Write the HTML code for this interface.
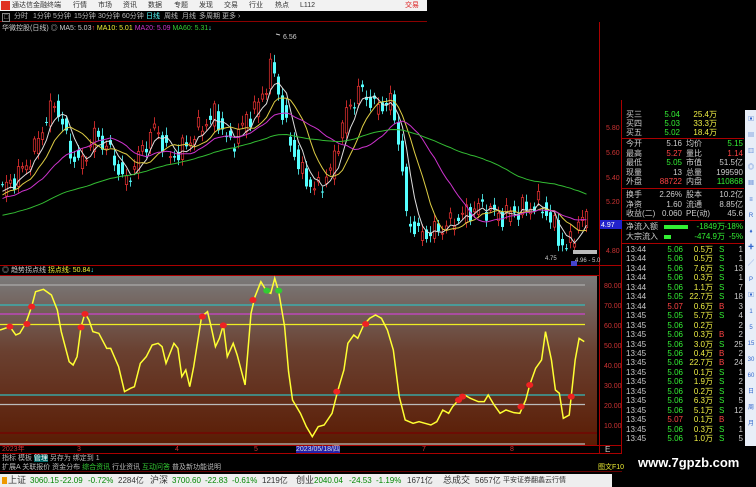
<!DOCTYPE html>
<html><head><meta charset="utf-8"><style>
*{margin:0;padding:0;box-sizing:border-box}
body{width:756px;height:487px;background:#000;overflow:hidden;position:relative;font-family:"Liberation Sans","Noto Sans CJK SC",sans-serif;font-size:8px;color:#ccc}
.a{position:absolute;white-space:nowrap;line-height:1}
#title{left:0;top:0;width:427px;height:11px;background:#f2f2f2;color:#333;font-size:7px}
#tabs{left:0;top:11px;width:427px;height:11px;border-bottom:1px solid #8b0000;font-size:7px}
.r{text-align:right}
</style></head><body>
<div id="title" class="a">
<div class="a" style="left:1px;top:1px;width:9px;height:9px;background:#e03020"></div>
<span class="a" style="left:12px;top:2px">通达信金融终端</span>
<span class="a" style="left:73px;top:2px">行情</span><span class="a" style="left:98px;top:2px">市场</span><span class="a" style="left:123px;top:2px">资讯</span><span class="a" style="left:148px;top:2px">数据</span><span class="a" style="left:174px;top:2px">专题</span><span class="a" style="left:199px;top:2px">发现</span><span class="a" style="left:224px;top:2px">交易</span><span class="a" style="left:249px;top:2px">行业</span><span class="a" style="left:275px;top:2px">热点</span><span class="a" style="left:300px;top:2px">L112</span>
<span class="a" style="left:405px;top:2px;color:#d22">交易</span>
</div>
<div id="tabs" class="a" style="color:#bbb">
<span class="a" style="left:2px;top:2px;border:1px solid #888;padding:0 1px">□</span>
<span class="a" style="left:14px;top:2px">分时</span><span class="a" style="left:33px;top:2px">1分钟</span><span class="a" style="left:53px;top:2px">5分钟</span><span class="a" style="left:74px;top:2px">15分钟</span><span class="a" style="left:98px;top:2px">30分钟</span><span class="a" style="left:122px;top:2px">60分钟</span><span class="a" style="left:146px;top:2px;color:#5ff">日线</span><span class="a" style="left:164px;top:2px">周线</span><span class="a" style="left:182px;top:2px">月线</span><span class="a" style="left:199px;top:2px">多周期</span><span class="a" style="left:222px;top:2px">更多 ›</span>
</div>
<div class="a" style="left:2px;top:25px;color:#ccc;font-size:7px">华微控股(日线) ◎ MA5: 5.03<span style="color:#f44">↑</span> <span style="color:#ee3">MA10: 5.01</span> <span style="color:#c3c">MA20: 5.09</span> <span style="color:#3c3">MA60: 5.31</span><span style="color:#5ff">↓</span></div>

<svg class="a" style="left:0;top:0" width="756" height="487" id="sv">
<defs><linearGradient id="g" x1="0" y1="0" x2="0" y2="1"><stop offset="0" stop-color="#7a7a7a"/><stop offset="0.45" stop-color="#6a4030"/><stop offset="1" stop-color="#5a1c04"/></linearGradient></defs>
<line x1="599.5" y1="22" x2="599.5" y2="453" stroke="#a00"/>
<line x1="0" y1="265.5" x2="622" y2="265.5" stroke="#a00"/>
<line x1="0" y1="275.5" x2="600" y2="275.5" stroke="#a00"/>
<line x1="621.5" y1="100" x2="621.5" y2="453" stroke="#a00"/>
<g id="cand"></g>
<g id="mas" fill="none" stroke-width="1"></g>
<text x="283" y="39" fill="#ccc" font-size="7">6.56</text>
<path d="M276 34 l4 1" stroke="#ccc"/>
<text x="545" y="260" fill="#ccc" font-size="6">4.75</text>
<rect x="573" y="250" width="24" height="4" fill="#bbb"/>
<text x="575" y="262" fill="#ccc" font-size="6">4.96 - 5.0</text>
<rect x="571" y="261" width="6" height="5" fill="#44c"/>
<rect x="0" y="276" width="597" height="169" fill="url(#g)"/>
<g stroke-width="1.3">
<line x1="0" y1="285" x2="585" y2="285" stroke="#aaa"/>
<line x1="0" y1="305" x2="585" y2="305" stroke="#3bb"/>
<line x1="0" y1="314" x2="585" y2="314" stroke="#c4c"/>
<line x1="0" y1="324.5" x2="585" y2="324.5" stroke="#ee2"/>
<line x1="0" y1="395" x2="585" y2="395" stroke="#3bb"/>
<line x1="0" y1="404.5" x2="585" y2="404.5" stroke="#bbb"/>
<line x1="0" y1="433" x2="597" y2="433" stroke="#700"/>
<line x1="0" y1="444" x2="585" y2="444" stroke="#bbb"/>
</g>
<g transform="translate(0,260) scale(0.3953,0.3333)">
<polyline fill="none" stroke="#ff3" stroke-width="1.5" vector-effect="non-scaling-stroke" points="0,210 25,200 40,225 50,220 65,190 80,140 90,95 110,88 130,105 145,150 155,215 175,305 185,315 195,290 205,200 215,160 225,180 235,215 250,220 270,265 280,265 300,320 315,395 330,385 340,380 355,310 370,290 385,255 400,250 410,260 420,310 440,250 450,265 460,350 470,330 480,380 490,320 500,245 510,170 525,155 535,205 545,260 555,235 565,195 575,290 590,250 600,285 620,375 635,160 645,110 660,65 675,95 685,100 695,55 705,95 720,200 730,335 740,420 760,460 775,500 790,530 805,500 820,495 840,460 855,390 870,330 880,250 895,225 905,235 920,195 935,175 950,165 965,175 980,210 995,270 1010,410 1025,480 1045,490 1060,485 1075,490 1090,495 1105,485 1120,450 1135,460 1145,440 1160,420 1175,405 1190,415 1210,425 1225,425 1235,405 1250,435 1265,460 1280,450 1300,458 1315,460 1330,420 1340,375 1355,325 1370,300 1380,215 1395,300 1405,390 1415,400 1425,475 1440,465 1455,300 1465,235 1478,245"/>
<g fill="#e22">
<circle cx="25" cy="200" r="9" /><circle cx="68" cy="192" r="9"/><circle cx="80" cy="140" r="9"/><circle cx="205" cy="202" r="9"/><circle cx="215" cy="162" r="9"/><circle cx="512" cy="170" r="9"/><circle cx="565" cy="196" r="9"/><circle cx="640" cy="120" r="9"/><circle cx="852" cy="395" r="9"/><circle cx="925" cy="192" r="9"/><circle cx="1160" cy="420" r="9"/><circle cx="1170" cy="410" r="9"/><circle cx="1318" cy="440" r="9"/><circle cx="1340" cy="375" r="9"/><circle cx="1445" cy="410" r="9"/>
</g>
<g fill="#3c3"><circle cx="675" cy="92" r="9"/><circle cx="705" cy="92" r="9"/></g>
</g>
<g fill="#c33" font-size="7">
<text x="606" y="130">5.80</text><text x="606" y="155">5.60</text><text x="606" y="180">5.40</text><text x="606" y="204">5.20</text><text x="606" y="253">4.80</text>
<text x="604" y="288">80.00</text><text x="604" y="308">70.00</text><text x="604" y="328">60.00</text><text x="604" y="348">50.00</text><text x="604" y="368">40.00</text><text x="604" y="388">30.00</text><text x="604" y="408">20.00</text><text x="604" y="428">10.00</text>
</g>
<rect x="600" y="220" width="22" height="9" fill="#22c"/>
<text x="601" y="227" fill="#fff" font-size="7">4.97</text>
<line x1="0" y1="445.5" x2="622" y2="445.5" stroke="#a00"/>
<line x1="0" y1="453.5" x2="622" y2="453.5" stroke="#a00"/>
</svg>

<div class="a" style="left:2px;top:267px;color:#ccc;font-size:7px">◎ 趋势拐点线 <span style="color:#ee3">拐点线: 50.84</span><span style="color:#5ff">↓</span></div>
<div class="a" style="left:0;top:446px;width:600px;color:#c33;font-size:7px">
<span class="a" style="left:2px">2023年</span><span class="a" style="left:77px">3</span><span class="a" style="left:175px">4</span><span class="a" style="left:254px">5</span><span class="a" style="left:296px;background:#22a;color:#ddd">2023/05/18/四</span><span class="a" style="left:422px">7</span><span class="a" style="left:510px">8</span></div>
<span class="a" style="left:605px;top:446px;color:#ccc">E</span>
<div class="a" style="left:2px;top:455px;color:#bbb;font-size:7px">指标 模板 <span style="background:#066;color:#fff">管理</span> 另存为 绑定到 1</div>
<div class="a" style="left:0;top:463px;width:622px;height:9px;border-bottom:1px solid #600;color:#bbb;font-size:7px;padding:1px 2px">扩展A 关联报价 资金分布 <span style="color:#3c3">综合资讯</span> 行业资讯 <span style="color:#3c3">互动问答</span> 普及新功能说明<span style="position:absolute;left:598px;color:#ee3">图文F10</span></div>
<div class="a" style="left:0;top:474px;width:612px;height:13px;background:#eee;color:#333;font-size:8px">
<span class="a" style="left:2px;top:3px;width:5px;height:7px;background:#e90"></span>
<span class="a" style="left:8px;top:2px;font-size:9px">上证</span><span class="a" style="left:30px;top:3px;color:#080">3060.15</span><span class="a" style="left:60px;top:3px;color:#080">-22.09</span><span class="a" style="left:88px;top:3px;color:#080">-0.72%</span><span class="a" style="left:118px;top:3px">2284亿</span>
<span class="a" style="left:150px;top:2px;font-size:9px">沪深</span><span class="a" style="left:172px;top:3px;color:#080">3700.60</span><span class="a" style="left:205px;top:3px;color:#080">-22.83</span><span class="a" style="left:232px;top:3px;color:#080">-0.61%</span><span class="a" style="left:262px;top:3px">1219亿</span>
<span class="a" style="left:296px;top:2px;font-size:9px">创业</span><span class="a" style="left:314px;top:3px;color:#080">2040.04</span><span class="a" style="left:349px;top:3px;color:#080">-24.53</span><span class="a" style="left:376px;top:3px;color:#080">-1.19%</span><span class="a" style="left:407px;top:3px">1671亿</span>
<span class="a" style="left:443px;top:2px;font-size:9px">总成交</span><span class="a" style="left:475px;top:3px">5657亿</span><span class="a" style="left:503px;top:3px;font-size:7px">平安证券翻蠡云行情</span>
</div>
<div class="a" style="left:638px;top:456px;color:#fff;font-size:13px;font-weight:bold">www.7gpzb.com</div>

<div class="a" style="left:745px;top:110px;width:11px;height:336px;background:#e8eef8"></div>
<div class="a" style="left:746px;top:112px;color:#36c;font-size:6px;line-height:16px;white-space:normal;width:10px;text-align:center">▣<br>▤<br>▥<br>◎<br>▦<br>≡<br>R<br>♦<br>✚<br>╱<br>P<br>▣<br>1<br>5<br>15<br>30<br>60<br>日<br>周<br>月</div>

<div class="a" id="rp" style="left:622px;top:100px;width:122px;height:346px;font-size:8px"></div>

<script>
var rp=document.getElementById('rp'),h='';
function T(x,y,t,c,r){h+='<span class="a'+(r?' r':'')+'" style="'+(r?'right:'+(122-x):'left:'+x)+'px;top:'+y+'px;color:'+c+'">'+t+'</span>';}
var W='#ccc',G='#3e3',Y='#ee4',R='#f44';
T(4,11,'买三',W);T(58,11,'5.04',G,1);T(95,11,'25.4万',Y,1);
T(4,20,'买四',W);T(58,20,'5.03',G,1);T(95,20,'33.3万',Y,1);
T(4,29,'买五',W);T(58,29,'5.02',G,1);T(95,29,'18.4万',Y,1);
h+='<div class="a" style="left:0;top:38px;width:122px;border-top:1px solid #a00"></div>';
var rows=[['今开','5.16',W,'均价','5.15',G],['最高','5.27',R,'量比','1.14',R],['最低','5.05',G,'市值','51.5亿',W],['现量','13',W,'总量','199590',W],['外盘','88722',R,'内盘','110868',G]];
rows.forEach(function(r,i){var y=40+i*9.6;T(4,y,r[0],W);T(60,y,r[1],r[2],1);T(64,y,r[3],W);T(121,y,r[4],r[5],1);});
h+='<div class="a" style="left:0;top:88px;width:122px;border-top:1px solid #a00"></div>';
rows=[['换手','2.26%',W,'股本','10.2亿',W],['净资','1.60',W,'流通','8.85亿',W],['收益(二)','0.060',W,'PE(动)','45.6',W]];
rows.forEach(function(r,i){var y=91+i*9.6;T(4,y,r[0],W);T(60,y,r[1],r[2],1);T(64,y,r[3],W);T(121,y,r[4],r[5],1);});
h+='<div class="a" style="left:0;top:120px;width:122px;border-top:1px solid #a00"></div>';
T(4,123,'净流入额',W);h+='<div class="a" style="left:42px;top:125px;width:24px;height:4px;background:#3e3"></div>';T(103,123,'-1849万',G,1);T(121,123,'-18%',G,1);
T(4,133,'大宗流入',W);h+='<div class="a" style="left:42px;top:135px;width:7px;height:4px;background:#3e3"></div>';T(103,133,'-474.9万',G,1);T(121,133,'-5%',G,1);
h+='<div class="a" style="left:0;top:143px;width:122px;border-top:1px solid #a00"></div>';
var tk=[['13:44','5.06','0.5万','S','1'],['13:44','5.06','0.5万','S','1'],['13:44','5.06','7.6万','S','13'],['13:44','5.06','0.3万','S','1'],['13:44','5.06','1.1万','S','7'],['13:44','5.05','22.7万','S','18'],['13:44','5.07','0.6万','B','3'],['13:45','5.05','5.7万','S','4'],['13:45','5.06','0.2万','','2'],['13:45','5.06','0.3万','B','2'],['13:45','5.06','3.0万','S','25'],['13:45','5.06','0.4万','B','2'],['13:45','5.06','22.7万','B','24'],['13:45','5.06','0.1万','S','1'],['13:45','5.06','1.9万','S','2'],['13:45','5.06','0.2万','S','3'],['13:45','5.06','6.3万','S','5'],['13:45','5.06','5.1万','S','12'],['13:45','5.07','0.1万','B','1'],['13:45','5.06','0.3万','S','1'],['13:45','5.06','1.0万','S','5']];
tk.forEach(function(r,i){var y=146+i*9.45;if(y>338)return;T(4,y,r[0],W);T(61,y,r[1],r[1]=='5.07'?R:G,1);T(91,y,r[2],Y,1);T(97,y,r[3],r[3]=='B'?R:G);T(121,y,r[4],W,1);});
rp.innerHTML=h;

function py(p){return 127+(5.8-p)*127.5;}
var wp=[[-240,4.9],[0,5.3],[15,5.4],[30,5.55],[45,5.85],[55,6.0],[70,5.6],[80,5.5],[95,5.75],[110,5.6],[125,5.35],[140,5.6],[155,5.8],[170,5.55],[185,5.65],[200,5.8],[215,5.9],[230,5.65],[245,5.85],[260,6.0],[272,6.3],[285,5.8],[300,5.45],[315,5.3],[330,5.45],[345,5.9],[360,6.1],[375,5.95],[390,6.0],[400,5.65],[405,5.1],[420,4.95],[440,5.0],[460,5.1],[480,5.18],[500,5.1],[520,5.15],[540,5.2],[555,5.0],[565,4.82],[575,5.0],[585,5.1]];
function ip(x){for(var i=1;i<wp.length;i++){if(x<=wp[i][0]){var a=wp[i-1],b=wp[i];return a[1]+(b[1]-a[1])*(x-a[0])/(b[0]-a[0]);}}return wp[wp.length-1][1];}
var N=147,pre=60,cl=[],op=[],hi=[],lo=[];
for(var i=-pre;i<N;i++){var x=2+i*4;var c=ip(x)+0.06*Math.sin(i*1.7)+0.04*Math.sin(i*3.1+1);var o=ip(x-4)+0.06*Math.sin(i*2.3+2);cl.push(c);op.push(o);hi.push(Math.max(o,c)+0.02+0.04*Math.abs(Math.sin(i*5.1)));lo.push(Math.min(o,c)-0.02-0.03*Math.abs(Math.sin(i*4.3)));}
var s='';
for(var k=pre;k<cl.length;k++){var x=2+(k-pre)*4+0.5;var up=cl[k]>=op[k];var col=up?'#e33':'#5ff';var t=py(Math.max(op[k],cl[k])),b=py(Math.min(op[k],cl[k]));if(b-t<1)b=t+1;
s+='<line x1="'+x+'" x2="'+x+'" y1="'+Math.max(33,py(hi[k]))+'" y2="'+py(lo[k])+'" stroke="'+col+'" stroke-width="0.8"/>';
if(up)s+='<rect x="'+(x-1.2)+'" y="'+t+'" width="2.4" height="'+(b-t)+'" fill="#000" stroke="'+col+'" stroke-width="0.7"/>';
else s+='<rect x="'+(x-1.5)+'" y="'+t+'" width="3" height="'+(b-t)+'" fill="'+col+'"/>';}
document.getElementById('cand').innerHTML=s;
var ms='',cfg=[[5,'#ddd'],[10,'#dc4'],[20,'#c3c'],[60,'#3b3']];
cfg.forEach(function(m){var pts=[];for(var k=pre;k<cl.length;k++){var sum=0;for(var j=0;j<m[0];j++)sum+=cl[k-j];var v=sum/m[0];pts.push((2+(k-pre)*4+0.5)+','+Math.max(33,py(v)).toFixed(1));}ms+='<polyline points="'+pts.join(' ')+'" stroke="'+m[1]+'" fill="none"/>';});
document.getElementById('mas').innerHTML=ms;
</script>
</body></html>
